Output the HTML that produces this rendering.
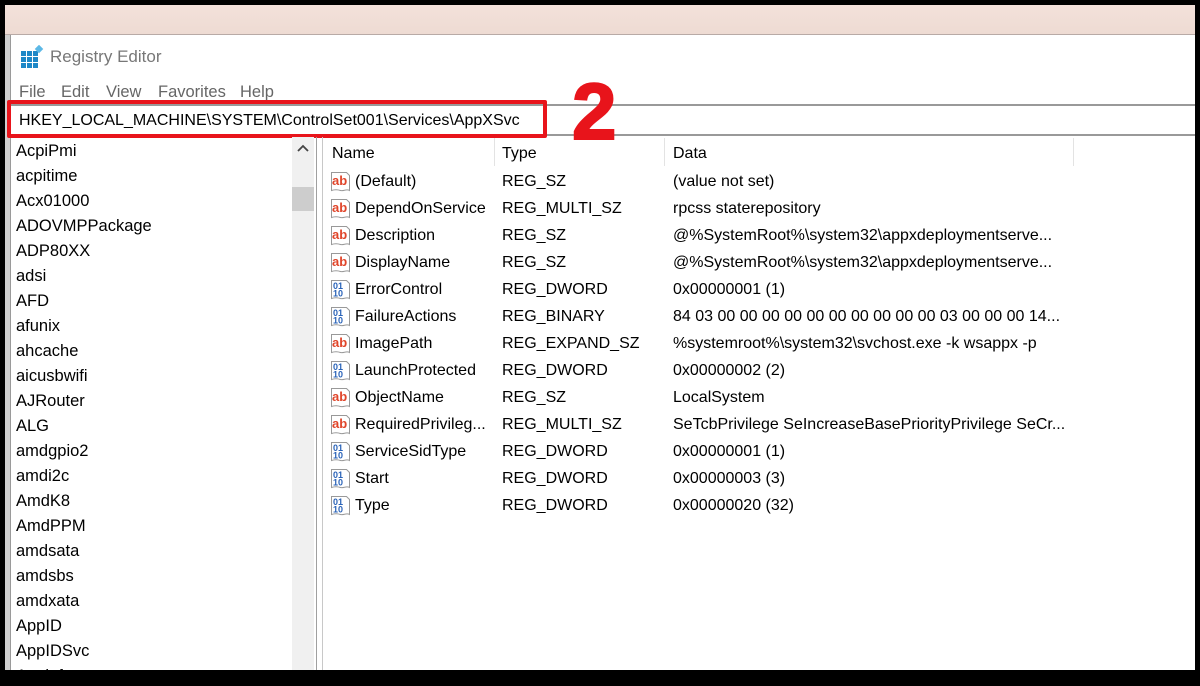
<!DOCTYPE html>
<html><head><style>
*{margin:0;padding:0;box-sizing:border-box}
body{width:1200px;height:675px;background:#000;position:relative;overflow:hidden;font-family:"Liberation Sans",Arial,sans-serif;color:#000}
.a{position:absolute}
.t{font-size:16px;white-space:nowrap}
.ico{position:absolute;width:22px;height:22px}
</style></head><body>
<div class="a" style="left:5px;top:5px;width:1190px;height:665px;background:#fff"></div>
<div class="a" style="left:5px;top:5px;width:1190px;height:30px;background:linear-gradient(#f3e1da,#eedbd3);border-bottom:1px solid #b8aaa6"></div>
<div class="a" style="left:5px;top:35px;width:5px;height:635px;background:#cfcfcf"></div>
<div class="a" style="left:10px;top:35px;width:1px;height:635px;background:#9a9a9a"></div>
<svg class="a" style="left:20px;top:45px" width="24" height="24" viewBox="0 0 24 24">
<g fill="#1e88c7"><rect x="1" y="6" width="5" height="5"/><rect x="7" y="6" width="5" height="5"/><rect x="13" y="6" width="5" height="5"/><rect x="1" y="12" width="5" height="5"/><rect x="7" y="12" width="5" height="5"/><rect x="13" y="12" width="5" height="5"/><rect x="1" y="18" width="5" height="5"/><rect x="7" y="18" width="5" height="5"/><rect x="13" y="18" width="5" height="5"/></g>
<rect x="16" y="1" width="6" height="6" fill="#5cb8e6" transform="rotate(45 19 4)"/></svg>
<div class="a t" style="left:50px;top:47px;font-size:17px;color:#777">Registry Editor</div>
<div class="a t" style="left:19px;top:83px;color:#666;font-size:16.5px">File</div>
<div class="a t" style="left:61px;top:83px;color:#666;font-size:16.5px">Edit</div>
<div class="a t" style="left:106px;top:83px;color:#666;font-size:16.5px">View</div>
<div class="a t" style="left:158px;top:83px;color:#666;font-size:16.5px">Favorites</div>
<div class="a t" style="left:240px;top:83px;color:#666;font-size:16.5px">Help</div>
<div class="a" style="left:11px;top:104px;width:1184px;height:2px;background:#999"></div>
<div class="a" style="left:11px;top:134px;width:1184px;height:2px;background:#999"></div>
<div class="a t" style="left:19px;top:112px;font-size:16px">HKEY_LOCAL_MACHINE\SYSTEM\ControlSet001\Services\AppXSvc</div>
<div class="a" style="left:7px;top:100px;width:540px;height:38px;border:4px solid #e8141b;border-radius:2px"></div>
<div class="a" style="left:572px;top:72px;font-size:80px;font-weight:bold;color:#e8141b;line-height:80px;-webkit-text-stroke:2px #e8141b">2</div>
<div class="a" style="left:292px;top:137px;width:22px;height:533px;background:#f0f0f0"></div>
<div class="a" style="left:292px;top:187px;width:22px;height:24px;background:#cdcdcd"></div>
<svg class="a" style="left:296px;top:143px" width="14" height="10"><path d="M2 8 L7 3 L12 8" fill="none" stroke="#444" stroke-width="1.8"/></svg>
<div class="a" style="left:316px;top:137px;width:1px;height:533px;background:#a0a0a0"></div>
<div class="a" style="left:322px;top:137px;width:1px;height:533px;background:#c8c8c8"></div>
<div id="tree"></div>
<div class="a t" style="left:332px;top:145px">Name</div>
<div class="a t" style="left:502px;top:145px">Type</div>
<div class="a t" style="left:673px;top:145px">Data</div>
<div class="a" style="left:494px;top:138px;width:1px;height:28px;background:#e3e3e3"></div>
<div class="a" style="left:664px;top:138px;width:1px;height:28px;background:#e3e3e3"></div>
<div class="a" style="left:1073px;top:138px;width:1px;height:28px;background:#e3e3e3"></div>
<div id="rows"></div>
<script>
var tree=["AcpiPmi","acpitime","Acx01000","ADOVMPPackage","ADP80XX","adsi","AFD","afunix","ahcache","aicusbwifi","AJRouter","ALG","amdgpio2","amdi2c","AmdK8","AmdPPM","amdsata","amdsbs","amdxata","AppID","AppIDSvc","Appinfo"];
var h="";tree.forEach(function(s,i){h+='<div class="a t" style="left:16px;top:'+(142+i*25)+'px;font-size:16.5px">'+s+'</div>'});
document.getElementById("tree").innerHTML=h;
var ab='<svg class="ico" viewBox="0 0 22 22"><path d="M1.5 1.5h15l3 3v15c-3-2-6 1-9 0s-6-1-9 0z" fill="#fff" stroke="#999"/><text x="2" y="14" font-family="Liberation Sans" font-weight="bold" font-size="13" fill="#e0452a">ab</text></svg>';
var bn='<svg class="ico" viewBox="0 0 22 22"><path d="M1.5 1.5h15l3 3v15c-3-2-6 1-9 0s-6-1-9 0z" fill="#fff" stroke="#999"/><text x="3" y="10" font-family="Liberation Sans" font-weight="bold" font-size="9" fill="#2a63b8">01</text><text x="3" y="17.5" font-family="Liberation Sans" font-weight="bold" font-size="9" fill="#2a63b8">10</text></svg>';
var R=[["ab","(Default)","REG_SZ","(value not set)"],["ab","DependOnService","REG_MULTI_SZ","rpcss staterepository"],["ab","Description","REG_SZ","@%SystemRoot%\\system32\\appxdeploymentserve..."],["ab","DisplayName","REG_SZ","@%SystemRoot%\\system32\\appxdeploymentserve..."],["b","ErrorControl","REG_DWORD","0x00000001 (1)"],["b","FailureActions","REG_BINARY","84 03 00 00 00 00 00 00 00 00 00 00 03 00 00 00 14..."],["ab","ImagePath","REG_EXPAND_SZ","%systemroot%\\system32\\svchost.exe -k wsappx -p"],["b","LaunchProtected","REG_DWORD","0x00000002 (2)"],["ab","ObjectName","REG_SZ","LocalSystem"],["ab","RequiredPrivileg...","REG_MULTI_SZ","SeTcbPrivilege SeIncreaseBasePriorityPrivilege SeCr..."],["b","ServiceSidType","REG_DWORD","0x00000001 (1)"],["b","Start","REG_DWORD","0x00000003 (3)"],["b","Type","REG_DWORD","0x00000020 (32)"]];
h="";R.forEach(function(r,i){var y=173+i*27;h+='<div class="a" style="left:330px;top:'+(y-2)+'px;width:22px;height:22px">'+(r[0]=="ab"?ab:bn)+'</div>';
h+='<div class="a t" style="left:355px;top:'+y+'px">'+r[1]+'</div><div class="a t" style="left:502px;top:'+y+'px">'+r[2]+'</div><div class="a t" style="left:673px;top:'+y+'px">'+r[3]+'</div>'});
document.getElementById("rows").innerHTML=h;
</script>
</body></html>
